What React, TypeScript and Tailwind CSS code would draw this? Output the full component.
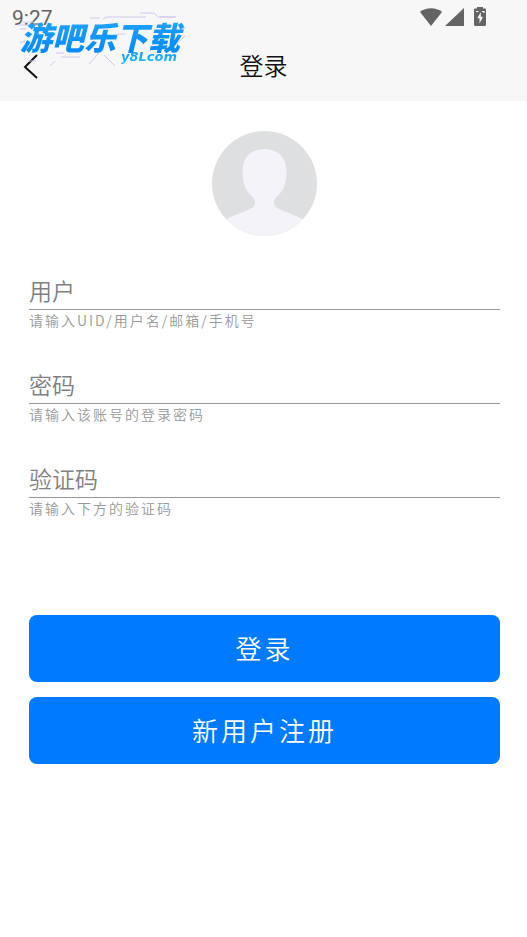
import React from "react";

const fields = [
  { id: "user", type: "text", placeholder: "用户", hint: "请输入UID/用户名/邮箱/手机号" },
  { id: "password", type: "password", placeholder: "密码", hint: "请输入该账号的登录密码" },
  { id: "captcha", type: "text", placeholder: "验证码", hint: "请输入下方的验证码" },
];

function StatusIcons() {
  return (
    <div className="flex items-center pb-0.5 text-[#646464]">
      <svg className="h-5 w-[22px]" viewBox="0 0 22 20" fill="currentColor" aria-hidden="true">
        <path d="M0 5C6 0 16 0 22 5L11 19Z" />
      </svg>
      <svg className="ml-0.5 h-5 w-5" viewBox="0 0 20 20" fill="currentColor" aria-hidden="true">
        <path d="M20 1V19H1Z" />
      </svg>
      <svg className="ml-2 h-5 w-4" viewBox="0 0 16 20" fill="currentColor" aria-hidden="true">
        <path d="M5 0H11V1.500H13Q14 1.500 14 2.500V17.500Q14 19 12.500 19H3.500Q2 19 2 17.500V2.500Q2 1.500 3 1.500H5Z" />
        <path d="M8.800 5 5.300 11.300H7.500V16.500L11 9.700H8.800Z" fill="#f7f7f7" />
        <path d="M4 4.500H6.500M10 4.500H12V6" fill="none" stroke="#f7f7f7" strokeWidth="1.200" />
      </svg>
    </div>
  );
}

function Watermark() {
  return (
    <div className="pointer-events-none absolute left-4 top-3 h-14 w-44">
      <svg className="absolute inset-0 h-full w-full" viewBox="0 0 176 56" fill="none" stroke="#cdc8ee" aria-hidden="true">
        <path d="M2 13H25M4 17H10M6 10H18M74 6H84M87 7 91 5H130M124 1H138L142 5H159M160 5H144M40 41H48M45 45H64M39 49 34 54M83 41 73 52M88 43 99 54M101 22H109M4 31 9 29M169 24 157 35M160 22 170 15M12 49H20" />
      </svg>
      <span className="absolute left-0.5 top-1.5 whitespace-nowrap bg-linear-to-b from-[#22a4ff] to-[#0088ff] bg-clip-text px-0.5 pr-2 text-[32px] font-black italic leading-9 text-transparent">
        游吧乐下载
      </span>
      <span className="absolute left-[105px] top-[37px] bg-linear-to-b from-[#1689ff] to-[#28c6f5] bg-clip-text pr-1 font-['DejaVu_Sans',sans-serif] text-[13px] font-bold italic leading-4 text-transparent">
        y8Lcom
      </span>
    </div>
  );
}

export default function App() {
  return (
    <div className="min-h-screen bg-white font-['Noto_Sans_CJK_SC',sans-serif] font-[350]">
      <header className="relative h-[101px] bg-[#f7f7f7]">
        <div className="flex h-9 items-center justify-between pl-3 pr-[39px]">
          <span className="font-[Roboto,sans-serif] text-[21px] font-normal leading-5 text-[#646464]">9:27</span>
          <StatusIcons />
        </div>
        <div className="grid h-[60px] grid-cols-[1fr_auto_1fr] items-center">
          <button type="button" aria-label="返回" className="ml-5 w-5">
            <svg className="h-8 w-5" viewBox="0 0 20 32" fill="none" stroke="#111" strokeWidth="2" aria-hidden="true">
              <path d="M17 5 5 17 17 28" />
            </svg>
          </button>
          <h1 className="pb-0.5 text-2xl font-[350] text-[#111]">登录</h1>
        </div>
        <Watermark />
      </header>

      <main className="pl-[29px] pr-[27px] pt-[30px]">
        <svg className="mx-auto h-[105px] w-[105px]" viewBox="0 0 105 105" role="img" aria-label="头像">
          <defs>
            <clipPath id="avatar">
              <circle cx="52.500" cy="52.500" r="52.500" />
            </clipPath>
          </defs>
          <g clipPath="url(#avatar)">
            <rect width="105" height="105" fill="#dddfe1" />
            <path
              d="M52.500 18C39 18 30.500 27 30.500 40C30.500 51 33 58.500 38 63.500C41 66.500 43 68 43 71.500C43 75 41 76.500 37 78.500C29 82 20 84.500 14 89V105H91V89C85 84.500 76 82 68 78.500C64 76.500 62 75 62 71.500C62 68 64 66.500 67 63.500C72 58.500 74.500 51 74.500 40C74.500 27 66 18 52.500 18Z"
              fill="#f3f3f9"
            />
          </g>
        </svg>

        <form className="mt-[38px]" onSubmit={(e) => e.preventDefault()}>
          <div className="flex flex-col gap-[38px]">
            {fields.map((f) => (
              <div key={f.id} className="flex flex-col">
                <input
                  id={f.id}
                  type={f.type}
                  placeholder={f.placeholder}
                  className="h-9 w-full border-b border-[#999] bg-transparent pb-1 text-[23px] text-[#333] outline-none placeholder:text-[#808080]"
                />
                <label htmlFor={f.id} className="text-sm leading-5 tracking-[2px] text-[#999]">
                  {f.hint}
                </label>
              </div>
            ))}
          </div>
          <div className="mt-[97px] flex flex-col gap-[15px]">
            <button type="submit" className="h-[67px] rounded-lg bg-[#007aff] pb-[3px] text-[26px] tracking-[3px] text-white">
              登录
            </button>
            <button type="button" className="h-[67px] rounded-lg bg-[#007aff] pb-[3px] text-[26px] tracking-[3px] text-white">
              新用户注册
            </button>
          </div>
        </form>
      </main>
    </div>
  );
}
